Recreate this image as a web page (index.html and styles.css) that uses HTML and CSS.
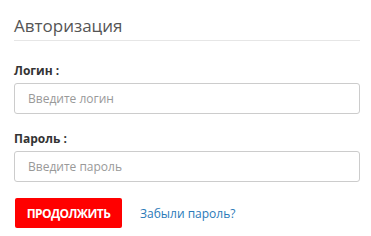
FILE: index.html
```html
<!DOCTYPE html>
<html lang="ru">
<head>
    <meta charset="UTF-8">
    <meta name="viewport" content="width=device-width, initial-scale=1.0">
    <title>Авторизация</title>
    <link rel="stylesheet" href="styles.css">
</head>
<body>
    <div class="auth">
        <h2 class="auth-title">Авторизация</h2>
        <form class="auth-form">
            <div class="form-group">
                <label for="login">Логин :</label>
                <input type="text" id="login" class="input-field" placeholder="Введите логин">
            </div>
            <div class="form-group">
                <label for="password">Пароль :</label>
                <input type="password" id="password" class="input-field" placeholder="Введите пароль">
            </div>
            <div class="form-actions">
                <button type="submit" class="btn-submit">Продолжить</button>
                <a href="#" class="forgot">Забыли пароль?</a>
            </div>
        </form>
    </div>
</body>
</html>
```

FILE: styles.css
```css
* {
    margin: 0;
    padding: 0;
    box-sizing: border-box;
}

body {
    font-family: 'Open Sans', 'Noto Sans', sans-serif;
    background: #fff;
    color: #333;
}

.auth {
    width: 346px;
    margin-left: 14px;
    padding-top: 14px;
}

.auth-title {
    font-size: 17px;
    font-weight: 400;
    color: #555;
    line-height: 24px;
    padding-bottom: 2px;
    border-bottom: 1px solid #e6e6e6;
    margin-bottom: 23px;
}

.form-group {
    margin-bottom: 18px;
}

.form-group label {
    display: block;
    font-size: 12px;
    font-weight: 700;
    color: #333;
    line-height: 14px;
    margin-bottom: 5px;
}

.input-field {
    display: block;
    width: 100%;
    height: 31px;
    padding: 0 13px;
    font-family: inherit;
    font-size: 12px;
    color: #333;
    border: 1px solid #ccc;
    border-radius: 3px;
    outline: none;
}

.input-field::placeholder {
    color: #999;
}

.form-actions {
    display: flex;
    align-items: center;
    gap: 18px;
    margin-top: -2px;
}

.btn-submit {
    width: 107px;
    height: 30px;
    margin-left: 1px;
    background: #f00;
    color: #fff;
    border: none;
    border-radius: 2px;
    font-family: inherit;
    font-size: 12px;
    font-weight: 700;
    text-transform: uppercase;
    letter-spacing: -0.6px;
    cursor: pointer;
}

.forgot {
    font-size: 12px;
    color: #2a7ab8;
    text-decoration: none;
}
```
